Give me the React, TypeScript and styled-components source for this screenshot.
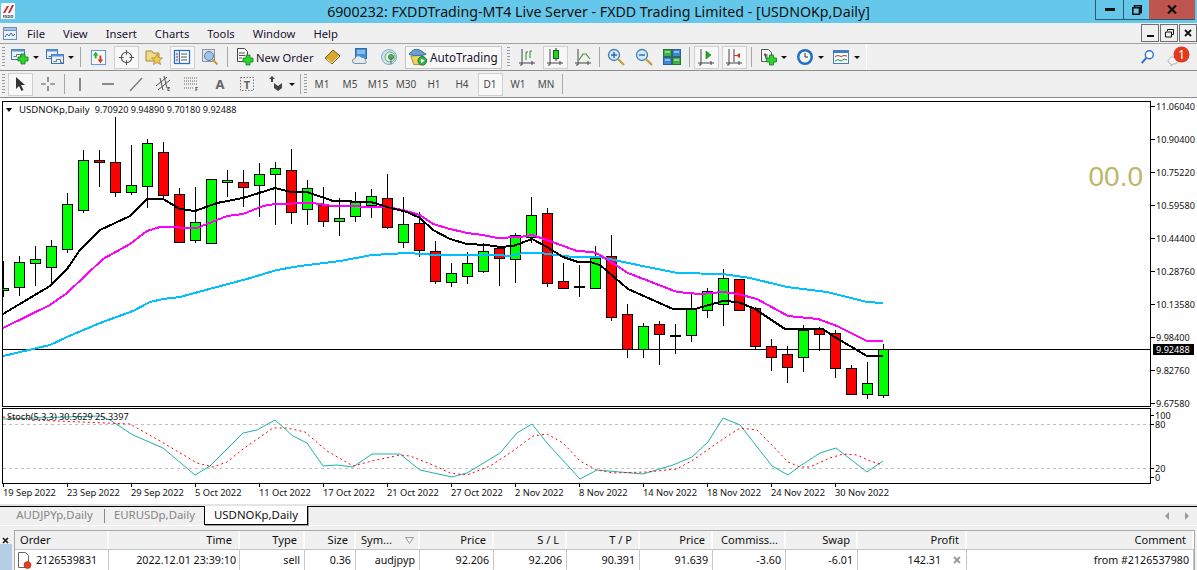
import React from "react";
import styled, { createGlobalStyle } from "styled-components";

const GlobalStyle = createGlobalStyle`
  html, body {
    margin: 0;
    padding: 0;
    background: #f0f0f0;
    overflow: hidden;
  }
  * { box-sizing: border-box; }
`;

const UI_FONT = `"Noto Sans", "Open Sans", sans-serif`;

const Window = styled.div`
  width: 1197px;
  height: 570px;
  display: flex;
  flex-direction: column;
  overflow: hidden;
  background: #f0f0f0;
  font-family: ${UI_FONT};
  font-size: 11px;
  color: #111;
`;

const TitleBar = styled.div`
  height: 23px;
  flex: none;
  display: grid;
  grid-template-columns: 1fr auto 1fr;
  background: #65c8ea;
`;

const TitleText = styled.div`
  font-size: 14.2px;
  line-height: 23px;
  color: #111;
  white-space: nowrap;
`;

const LogoSlot = styled.div`
  padding: 3px 0 0 1px;
`;

const WindowButtons = styled.div`
  display: flex;
  justify-content: flex-end;
  padding-right: 2px;
`;

const WindowButton = styled.div<{ $w: number; $close?: boolean }>`
  width: ${(p) => p.$w}px;
  height: 20px;
  display: flex;
  align-items: center;
  justify-content: center;
  background: ${(p) => (p.$close ? "#c0554f" : "transparent")};
  border: 0 solid #2b5a70;
  border-bottom-width: 1px;
  border-left-width: ${(p) => (p.$close ? 0 : 1)}px;
`;

const MenuBar = styled.div`
  height: 21px;
  flex: none;
  display: flex;
  align-items: center;
  border-bottom: 1px solid #a0a0a0;
  padding-left: 3px;
`;

const MenuItems = styled.div`
  display: flex;
  gap: 18px;
  margin-left: 10px;
  color: #1c1030;
  font-size: 11.25px;
`;

const MdiButtons = styled.div`
  margin-left: auto;
  display: flex;
  gap: 1px;
`;

const MdiButton = styled.div`
  width: 18px;
  height: 18px;
  display: flex;
  align-items: center;
  justify-content: center;
  border: 1px solid #707070;
  background: #f0f0f0;
`;

const ToolbarRow = styled.div`
  height: 27px;
  flex: none;
  display: flex;
  align-items: center;
  border-bottom: 1px solid #8c8c8c;
`;

const Grip = styled.div<{ $mx?: number }>`
  width: 3px;
  height: 20px;
  margin: 0 ${(p) => p.$mx ?? 1}px 0 ${(p) => p.$mx ?? 2}px;
  background: repeating-linear-gradient(#9a9a9a 0 1px, #f0f0f0 1px 3px);
`;

const Cell = styled.div<{ $w: number; $active?: boolean }>`
  width: ${(p) => p.$w}px;
  height: 23px;
  flex: none;
  display: flex;
  align-items: center;
  justify-content: center;
  position: relative;
  &::before {
    content: "";
    display: ${(p) => (p.$active ? "block" : "none")};
    position: absolute;
    inset: 0 1px 0 2px;
    background: #f8f8f8;
    border: 1px solid #cfcfcf;
  }
  & > * {
    position: relative;
  }
`;

const DropCell = styled(Cell)`
  justify-content: flex-start;
  padding-left: 5px;
  gap: 4px;
`;

const Caret = styled.span`
  width: 0;
  height: 0;
  border-left: 3px solid transparent;
  border-right: 3px solid transparent;
  border-top: 3px solid #111;
`;

const Separator = styled.div<{ $w: number }>`
  width: ${(p) => p.$w}px;
  height: 20px;
  flex: none;
  display: flex;
  justify-content: center;
  &::after {
    content: "";
    width: 1px;
    background: #a8a8a8;
  }
`;

const NewOrderButton = styled.div`
  width: 89px;
  height: 23px;
  flex: none;
  display: flex;
  align-items: center;
  gap: 2px;
  padding-left: 6px;
  font-size: 11.25px;
  color: #1c1030;
`;

const AutoTradingButton = styled.div`
  width: 97px;
  height: 23px;
  flex: none;
  margin: 0 2px;
  display: flex;
  align-items: center;
  gap: 1px;
  padding-left: 2px;
  background: #f8f8f8;
  border: 1px solid #c4c4c4;
  font-size: 11.7px;
  color: #1c1030;
`;

const Group = styled.div`
  width: 867px;
  height: 26px;
  flex: none;
  display: flex;
  align-items: center;
  border-right: 1px solid #ffffff;
`;

const RightIcons = styled.div`
  margin-left: auto;
  display: flex;
  align-items: center;
  gap: 11px;
  padding-right: 6px;
`;

const PeriodLabel = styled.span`
  font-size: 10px;
  color: #4a4a4a;
`;

const ChartArea = styled.div`
  height: 408px;
  flex: none;
  display: flex;
  flex-direction: column;
  background: #ffffff;
  border-bottom: 2px solid #e4e4e4;
  padding-top: 3px;
  font-size: 9.1px;
  color: #111;
`;

const PaneRow = styled.div<{ $h: number; $mt?: number }>`
  height: ${(p) => p.$h}px;
  margin-top: ${(p) => p.$mt ?? 0}px;
  flex: none;
  display: flex;
`;

const Plot = styled.div`
  width: 1149px;
  margin-left: 2px;
  flex: none;
  border: 1px solid #000;
  position: relative;
  overflow: hidden;
  svg {
    display: block;
  }
`;

const Legend = styled.div<{ $left: number; $top: number }>`
  position: absolute;
  left: ${(p) => p.$left}px;
  top: ${(p) => p.$top}px;
  display: flex;
  align-items: center;
  white-space: nowrap;
  line-height: 12px;
  gap: 5px;
`;

const LegendSymbol = styled.span`
  font-size: 9.6px;
  margin-left: 1px;
`;

const LegendArrow = styled.span`
  width: 0;
  height: 0;
  border-left: 3.5px solid transparent;
  border-right: 3.5px solid transparent;
  border-top: 4px solid #000;
  margin-right: 1px;
`;

const BigValue = styled.div`
  position: absolute;
  right: 7px;
  top: 59px;
  font-family: "Liberation Sans", Arial, sans-serif;
  font-size: 28px;
  line-height: 32px;
  color: #bdb76b;
`;

const PriceAxis = styled.div`
  flex: 1;
  position: relative;
`;

const PriceTick = styled.div`
  height: 33px;
  line-height: 12px;
  padding-left: 5px;
  position: relative;
  &::before {
    content: "";
    position: absolute;
    left: 0;
    top: 5px;
    width: 4px;
    height: 1px;
    background: #000;
  }
`;

const CurrentPrice = styled.div`
  position: absolute;
  left: 2px;
  top: 243px;
  width: 41px;
  height: 11px;
  line-height: 11px;
  padding-left: 3px;
  background: #000;
  color: #fff;
`;

const StochTick = styled.div<{ $top: number }>`
  position: absolute;
  left: 4px;
  top: ${(p) => p.$top}px;
  line-height: 9px;
  &::before {
    content: "";
    position: absolute;
    left: -4px;
    top: 4px;
    width: 3px;
    height: 1px;
    background: #000;
  }
`;

const DateAxis = styled.div`
  height: 20px;
  flex: none;
  display: flex;
  padding-left: 3px;
`;

const DateCell = styled.div`
  width: 64px;
  flex: none;
  white-space: nowrap;
  padding-top: 3px;
  line-height: 12px;
  font-size: 9.3px;
  position: relative;
  &::before {
    content: "";
    position: absolute;
    left: 0;
    top: 0;
    width: 1px;
    height: 3px;
    background: #000;
  }
`;

const TabBar = styled.div`
  height: 20px;
  flex: none;
  display: flex;
  align-items: stretch;
  border-top: 1px solid #000;
  border-bottom: 1px solid #ffffff;
  padding-left: 5px;
  font-size: 11.4px;
`;

const Tab = styled.div<{ $w: number; $active?: boolean }>`
  width: ${(p) => p.$w}px;
  flex: none;
  text-align: center;
  line-height: 18px;
  color: ${(p) => (p.$active ? "#111" : "#858585")};
  background: ${(p) => (p.$active ? "#fff" : "transparent")};
  border-left: ${(p) => (p.$active ? "1px solid #000" : "none")};
  border-right: ${(p) => (p.$active ? "1px solid #000" : "none")};
  border-bottom: ${(p) => (p.$active ? "1px solid #000" : "none")};
  box-shadow: ${(p) => (p.$active ? "1px 1px 0 #a0a0a0" : "none")};
  margin-top: -1px;
  position: relative;
`;

const TabDivider = styled.div`
  width: 1px;
  height: 14px;
  margin: 2px 0 0 0;
  background: #888;
  flex: none;
`;

const TabArrows = styled.div`
  margin-left: auto;
  display: flex;
  align-items: center;
  gap: 16px;
  padding-right: 8px;
`;

const TabArrow = styled.span<{ $right?: boolean }>`
  width: 0;
  height: 0;
  border-top: 4px solid transparent;
  border-bottom: 4px solid transparent;
  border-left: ${(p) => (p.$right ? "4px solid #9a9a9a" : "none")};
  border-right: ${(p) => (p.$right ? "none" : "4px solid #9a9a9a")};
`;

const Terminal = styled.div`
  flex: 1;
  display: flex;
  padding-top: 4px;
`;

const SideStrip = styled.div`
  width: 13px;
  flex: none;
  display: flex;
  flex-direction: column;
  margin-right: 1px;
`;

const SideClose = styled.div`
  height: 14px;
  padding: 2px 0 0 2px;
`;

const SideBlue = styled.div`
  flex: 1;
  width: 12px;
  background: #b5cde5;
`;

const Table = styled.div`
  width: 1181px;
  flex: none;
  border-top: 1px solid #a8a8a8;
  border-right: 1px solid #a8a8a8;
  border-left: 1px solid #a8a8a8;
  background: #fff;
`;

const COLUMNS = "94px 131px 65px 51px 64px 74px 73px 73px 73px 73px 72px 109px 1fr";

const HeaderRow = styled.div`
  display: grid;
  grid-template-columns: ${COLUMNS};
  height: 19px;
  background: #f0f0f0;
  border-bottom: 1px solid #c4c4c4;
  font-size: 11.1px;
`;

const HeaderCell = styled.div<{ $left?: boolean }>`
  padding: 0 ${(p) => (p.$left ? 0 : 6)}px 0 ${(p) => (p.$left ? 5 : 0)}px;
  line-height: 18px;
  border-right: 2px solid #fbfbfb;
  white-space: nowrap;
  display: flex;
  align-items: center;
  justify-content: ${(p) => (p.$left ? "space-between" : "flex-end")};
`;

const DataRow = styled.div`
  display: grid;
  grid-template-columns: ${COLUMNS};
  height: 20px;
  background: #fff;
  font-size: 10.7px;
`;

const DataCell = styled.div<{ $pr?: number }>`
  display: flex;
  align-items: center;
  justify-content: flex-end;
  gap: 4px;
  padding-right: ${(p) => p.$pr ?? 4}px;
  border-right: 1px solid #c8c8c8;
  white-space: nowrap;
`;

const OrderCell = styled(DataCell)`
  justify-content: flex-start;
  padding-left: 2px;
`;

const SortMark = styled.svg`
  margin-right: 4px;
`;

// ---- icons ----

const Ico: React.FC<{ s?: number; children: React.ReactNode }> = ({ s = 18, children }) => (
  <svg width={s} height={s} viewBox="0 0 18 18">
    {children}
  </svg>
);

const Plus = ({ x, y }: { x: number; y: number }) => (
  <path
    d={`M${x - 2} ${y - 5}h4v3h3v4h-3v3h-4v-3h-3v-4h3z`}
    fill="#2bd62b"
    stroke="#0c7a1a"
    strokeWidth=".8"
  />
);

const MiniWindow = ({ x, y, w, h }: { x: number; y: number; w: number; h: number }) => (
  <g>
    <rect x={x} y={y} width={w} height={h} fill="#eaf2fb" stroke="#3d74b4" />
    <rect x={x} y={y} width={w} height="2" fill="#5c93d1" />
    <path d={`M${x + 2} ${y + 7}h3v-2h4v3h2`} fill="none" stroke="#555" strokeWidth=".8" />
  </g>
);

const NewChartIcon = () => (
  <Ico>
    <MiniWindow x={0.5} y={1.5} w={13} h={10} />
    <Plus x={12} y={11} />
  </Ico>
);

const ProfilesIcon = () => (
  <Ico>
    <MiniWindow x={0.5} y={1.5} w={11} h={9} />
    <MiniWindow x={5.5} y={6.5} w={12} h={9} />
  </Ico>
);

const ExpertIcon = () => (
  <Ico s={17}>
    <rect x="1.5" y="1.5" width="15" height="15" fill="#f7f7f7" stroke="#5d92cc" />
    <path d="M6 3l3 4H7v3H5V7H3z" fill="#22b522" />
    <path d="M11 15l-3-4h2V7h2v4h2z" fill="#e2351e" />
  </Ico>
);

const CrosshairIcon = () => (
  <Ico s={17}>
    <circle cx="9" cy="9" r="5.5" fill="none" stroke="#555" strokeWidth="1.2" />
    <path d="M9 1v5M9 12v5M1 9h5M12 9h5" stroke="#555" strokeWidth="1.2" />
  </Ico>
);

const FolderStarIcon = () => (
  <Ico>
    <path d="M1 3h6l1 2h6v8H1z" fill="#f1d98a" stroke="#a88a3a" />
    <path d="M12 6l1.7 3.6 3.8.4-2.9 2.6.9 3.9-3.5-2-3.5 2 .9-3.9L6.500 10l3.800-.4z" fill="#eec84a" stroke="#a5822a" strokeWidth=".7" />
  </Ico>
);

const NavigatorIcon = () => (
  <Ico>
    <rect x="1.5" y="2.500" width="15" height="13" fill="#fff" stroke="#2c6fb5" strokeWidth="1.300" />
    <rect x="1.500" y="2.500" width="5" height="13" fill="#cfe2f6" stroke="#2c6fb5" />
    <path d="M8 6h6M8 9h6M8 12h6" stroke="#555" />
    <path d="M3 6h2M3 9h2M3 12h2" stroke="#c33" />
  </Ico>
);

const TesterIcon = () => (
  <Ico>
    <rect x="1.500" y="1.500" width="12" height="12" fill="#dfe4ea" stroke="#8a94a0" />
    <circle cx="8" cy="8" r="4.500" fill="#9cc6ea" stroke="#5a7ea0" />
    <path d="M11.500 11.500l5 5" stroke="#c99b3a" strokeWidth="2" />
  </Ico>
);

const NewOrderIcon = () => (
  <Ico>
    <path d="M1.500.5h7l3 3v10h-10z" fill="#fff" stroke="#444" />
    <path d="M3 5h6M3 7.500h6M3 10h3" stroke="#555" />
    <Plus x={12} y={12} />
  </Ico>
);

const BookIcon = () => (
  <Ico>
    <path d="M1 10L9 2l7 6-8 8z" fill="#d8a92e" stroke="#7a5a12" />
    <path d="M3 11l5 4 7-7" fill="none" stroke="#f6e7ae" />
  </Ico>
);

const CloudIcon = () => (
  <Ico>
    <rect x="3.500" y=".5" width="11" height="10" fill="#3f92dc" stroke="#2a6cab" />
    <path d="M5 3h8M5 5h8" stroke="#cfe6fa" />
    <path d="M3 15.500a2.500 2.500 0 010-5 3.500 3.500 0 016.500-1 3 3 0 014 3 2 2 0 010 3z" fill="#e2e9f1" stroke="#7f8d9c" />
  </Ico>
);

const SignalIcon = () => (
  <Ico>
    <circle cx="9" cy="9" r="7.500" fill="#cfe3ee" stroke="#7ab0cc" />
    <circle cx="10" cy="9" r="5" fill="#e6f1e2" stroke="#6ab07a" />
    <circle cx="11" cy="9" r="2.500" fill="#58b562" stroke="#37894a" />
    <path d="M11 9v7" stroke="#5a6a70" />
  </Ico>
);

const AutoTradingIcon = () => (
  <svg width="21" height="18" viewBox="0 0 22 18">
    <path d="M3 8l12-1 2 6-4 4H6z" fill="#f0d25e" stroke="#a88a2a" />
    <path d="M1 6c2-1 3-5 8-5s7 4 10 5c-3 2-15 2-18 0z" fill="#6b9fd2" stroke="#3a6a9c" />
    <circle cx="15" cy="13" r="4.500" fill="#2fb34a" stroke="#16752c" />
    <path d="M13.500 10.500l4 2.500-4 2.500z" fill="#fff" />
  </svg>
);

const Axes = () => <path d="M4 1v16M1 15h16M2 17h2M14 13v4" stroke="#444" fill="none" />;

const BarsIcon = () => (
  <Ico>
    <Axes />
    <path d="M8 12V4M8 4h2M12 10V3M12 3h2" stroke="#2a8f2a" fill="none" />
  </Ico>
);

const CandleIcon = () => (
  <Ico>
    <Axes />
    <path d="M10 0v13" stroke="#222" />
    <rect x="7.500" y="2.500" width="5" height="8" fill="#22d422" stroke="#0d6d0d" />
  </Ico>
);

const LineIcon = () => (
  <Ico>
    <Axes />
    <path d="M5 12l4-6 3 0 4 5" stroke="#3a9a3a" fill="none" strokeWidth="1.200" />
  </Ico>
);

const ZoomIcon = ({ plus }: { plus?: boolean }) => (
  <Ico>
    <circle cx="7" cy="7" r="5.500" fill="#d4e8f8" stroke="#3f7fb8" strokeWidth="1.300" />
    <path d={plus ? "M4 7h6M7 4v6" : "M4 7h6"} stroke="#2a6cab" strokeWidth="1.400" />
    <path d="M11 11l6 6" stroke="#c99b3a" strokeWidth="2.200" />
  </Ico>
);

const TileIcon = () => (
  <Ico>
    <rect x=".5" y="1.500" width="8" height="7" fill="#3fae4a" stroke="#24762e" />
    <rect x="9.500" y="1.500" width="8" height="7" fill="#3f86d8" stroke="#2a5f9f" />
    <rect x=".5" y="9.500" width="8" height="7" fill="#3f86d8" stroke="#2a5f9f" />
    <rect x="9.500" y="9.500" width="8" height="7" fill="#3fae4a" stroke="#24762e" />
    <path d="M2 4h5M11 4h5M2 12h5M11 12h5" stroke="#e8f3ff" />
  </Ico>
);

const AutoScrollIcon = () => (
  <Ico>
    <Axes />
    <path d="M9 3l5 4-5 4z" fill="#2aa82a" stroke="#127012" strokeWidth=".6" />
  </Ico>
);

const ShiftIcon = () => (
  <Ico>
    <Axes />
    <path d="M9 1v13" stroke="#444" />
    <path d="M15 5l-4 2.500 4 2.500z" fill="#d8351e" />
    <path d="M9 7.500h3" stroke="#d8351e" />
  </Ico>
);

const IndicatorsIcon = () => (
  <Ico>
    <path d="M2.500 1.500h7l3 3v9h-10z" fill="#f4f4f4" stroke="#555" />
    <path d="M5 6h2v5M8 6v5" stroke="#777" />
    <Plus x={12.500} y={12} />
  </Ico>
);

const ClockIcon = () => (
  <Ico>
    <circle cx="9" cy="9" r="8" fill="#1f6fc0" />
    <circle cx="9" cy="9" r="5.500" fill="#f2f4f6" />
    <path d="M9 5v4h3" stroke="#333" fill="none" />
  </Ico>
);

const TemplateIcon = () => (
  <Ico>
    <rect x="1.500" y="2.500" width="15" height="13" fill="#f4f8fc" stroke="#4a7cb0" />
    <rect x="1.500" y="2.500" width="15" height="2.500" fill="#3e7fc4" />
    <path d="M3 8.500l3-1 3 1 3-1 3 .5" stroke="#b3402a" fill="none" />
    <path d="M3 13l3-1.500 3 1.500 3-2 3 1" stroke="#2d9a3a" fill="none" />
  </Ico>
);

const SearchIcon = () => (
  <Ico s={16}>
    <circle cx="10.500" cy="6.500" r="4.500" fill="#fff" stroke="#2f6fc8" strokeWidth="1.600" />
    <path d="M7 10l-5 6" stroke="#2f6fc8" strokeWidth="2.200" />
  </Ico>
);

const BubbleIcon = () => (
  <svg width="24" height="22" viewBox="0 0 24 22">
    <path d="M2 17c-2-2 0-6 4-6s6 3 4 6c-1 1-3 1-4 1l-2 2v-2c-1 0-1-1-2-1z" fill="#f4f4f4" stroke="#b4b4b4" />
    <circle cx="14.500" cy="8.500" r="8" fill="#e23a1e" />
    <text x="14.500" y="13" textAnchor="middle" fontFamily={UI_FONT} fontSize="12.500" fill="#fff">
      1
    </text>
  </svg>
);

const CursorIcon = () => (
  <Ico>
    <path d="M5 2l9 8h-4l2.500 5-2 1-2.500-5-3 3z" fill="#333" />
  </Ico>
);

const ThinCross = () => (
  <Ico>
    <path d="M9 2v5M9 11v5M2 9h5M11 9h5" stroke="#555" strokeWidth="1.200" />
  </Ico>
);

const VLine = () => (
  <Ico>
    <path d="M9 3v13" stroke="#555" strokeWidth="1.300" />
  </Ico>
);

const HLine = () => (
  <Ico>
    <path d="M3 9h12" stroke="#555" strokeWidth="1.300" />
  </Ico>
);

const TrendLine = () => (
  <Ico>
    <path d="M3 16L15 3" stroke="#777" strokeWidth="1.200" />
  </Ico>
);

const ChannelIcon = () => (
  <Ico>
    <path d="M1 11L12 2M3 15L15 5M5 3l3 12M9 1l3 12" stroke="#555" />
    <text x="12" y="16" fontFamily={UI_FONT} fontSize="5.500" fontWeight="700" fill="#444">
      E
    </text>
  </Ico>
);

const FiboIcon = () => (
  <Ico>
    <path d="M1 3h13M1 6h13M1 9h13M1 13h10" stroke="#666" strokeDasharray="1 1" />
    <text x="12" y="16" fontFamily={UI_FONT} fontSize="5.500" fontWeight="700" fill="#444">
      F
    </text>
  </Ico>
);

const LetterA = () => (
  <Ico>
    <text x="9" y="14" textAnchor="middle" fontFamily={UI_FONT} fontSize="13" fontWeight="700" fill="#666">
      A
    </text>
  </Ico>
);

const LetterT = () => (
  <Ico>
    <rect x="1.500" y="2.500" width="13" height="13" fill="none" stroke="#777" strokeDasharray="1.500 1.500" />
    <text x="8" y="13.500" textAnchor="middle" fontFamily={UI_FONT} fontSize="11" fontWeight="700" fill="#666">
      T
    </text>
  </Ico>
);

const ArrowsIcon = () => (
  <Ico>
    <path d="M5 1l3 3H6v3H4V4H2z" fill="#444" />
    <path d="M7 8l4 3 4-3v5l-4 3-4-3z" fill="#444" />
  </Ico>
);

const Logo = () => (
  <svg width="14" height="16" viewBox="0 0 14 16">
    <rect width="14" height="16" fill="#fdfdfd" />
    <path d="M2 10L6 3h2l-4 7zM7 10l4-8h2l-4 8z" fill="#c9222a" />
    <text x="7" y="14.500" textAnchor="middle" fontFamily={UI_FONT} fontSize="4" fontWeight="700" fill="#333">
      FXDD
    </text>
  </svg>
);

const MenuDocIcon = () => (
  <svg width="14" height="16" viewBox="0 0 14 16">
    <rect x=".5" y="2.500" width="13" height="12" fill="#e8f1fa" stroke="#6a8fb8" />
    <rect x=".5" y="2.500" width="13" height="3" fill="#a7c5e6" stroke="#6a8fb8" />
    <path d="M2 12l2-3 2 2 2-3 2 3 2-2" stroke="#4a6a90" fill="none" />
  </svg>
);

// ---- chart data, page coordinates ----

type Candle = [number, number, number, number, number, "g" | "r"];

const FIRST_X = 3;
// body top, body bottom, wick top, wick bottom, colour; one candle per 16px
const rows: [number, number, number, number, "g" | "r"][] = [
  [288, 290, 261, 297, "g"],
  [262, 287, 256, 296, "g"],
  [259, 263, 246, 286, "g"],
  [246, 267, 240, 283, "g"],
  [204, 249, 193, 253, "g"],
  [160, 210, 150, 213, "g"],
  [160, 162, 150, 187, "r"],
  [162, 192, 117, 197, "r"],
  [185, 192, 145, 195, "g"],
  [143, 186, 139, 208, "g"],
  [152, 195, 142, 199, "r"],
  [194, 242, 188, 243, "r"],
  [222, 240, 187, 243, "g"],
  [179, 243, 179, 243, "g"],
  [180, 182, 170, 197, "g"],
  [182, 187, 170, 207, "r"],
  [174, 185, 163, 217, "g"],
  [168, 174, 162, 225, "g"],
  [170, 212, 149, 224, "r"],
  [188, 209, 180, 225, "g"],
  [205, 221, 187, 227, "r"],
  [218, 221, 198, 236, "g"],
  [202, 216, 192, 222, "g"],
  [196, 205, 189, 218, "g"],
  [198, 227, 174, 229, "r"],
  [224, 242, 197, 248, "g"],
  [223, 250, 212, 257, "r"],
  [251, 281, 241, 284, "r"],
  [273, 282, 263, 287, "g"],
  [263, 276, 252, 284, "g"],
  [251, 271, 243, 273, "g"],
  [248, 258, 248, 286, "r"],
  [235, 259, 233, 283, "g"],
  [215, 237, 197, 243, "g"],
  [213, 283, 208, 287, "r"],
  [281, 288, 263, 289, "r"],
  [286, 286, 265, 297, "r"],
  [258, 288, 246, 288, "g"],
  [256, 317, 235, 321, "r"],
  [314, 349, 304, 358, "r"],
  [326, 349, 323, 358, "g"],
  [324, 334, 321, 365, "r"],
  [335, 335, 324, 354, "g"],
  [309, 335, 292, 342, "g"],
  [291, 310, 288, 318, "g"],
  [278, 304, 269, 326, "g"],
  [279, 310, 279, 310, "r"],
  [308, 346, 307, 349, "r"],
  [346, 357, 339, 371, "r"],
  [354, 367, 346, 383, "r"],
  [330, 357, 325, 372, "g"],
  [329, 334, 327, 351, "r"],
  [333, 368, 330, 378, "r"],
  [368, 394, 365, 394, "r"],
  [383, 394, 362, 399, "g"],
  [349, 395, 344, 398, "g"],
];

const candles: Candle[] = rows.map((r, i) => [FIRST_X + i * 16, r[0], r[1], r[2], r[3], r[4]]);

const toPoints = (pts: number[][]) => pts.map((p) => p.join(",")).join(" ");

const blackMa = [
  [3, 314], [50, 286], [67, 269], [80, 250], [100, 230], [130, 216], [147, 199], [163, 199],
  [180, 209], [195, 211], [217, 203], [243, 198], [275, 188], [291, 192], [307, 192], [333, 201],
  [371, 202], [387, 207], [407, 212], [420, 218], [433, 230], [450, 239], [467, 244], [487, 245],
  [500, 247], [513, 246], [532, 239], [547, 247], [563, 257], [578, 262], [590, 262], [600, 265],
  [628, 289], [673, 309], [695, 309], [723, 301], [738, 302], [755, 309], [785, 329], [823, 329],
  [833, 336], [867, 356], [883, 356],
];

const magentaMa = [
  [3, 328], [50, 305], [67, 293], [103, 259], [130, 244], [147, 231], [160, 227], [197, 228],
  [227, 216], [243, 214], [263, 206], [275, 204], [313, 203], [332, 206], [387, 207], [403, 210],
  [420, 215], [433, 224], [450, 229], [467, 233], [483, 235], [497, 238], [520, 237], [532, 235],
  [547, 240], [577, 251], [593, 252], [600, 255], [628, 273], [677, 292], [700, 294], [723, 292],
  [738, 294], [757, 299], [788, 316], [818, 319], [837, 326], [867, 341], [883, 341],
];

const blueMa = [
  [3, 356], [33, 349], [50, 345], [67, 337], [100, 323], [133, 311], [150, 302], [163, 299],
  [180, 297], [213, 288], [247, 279], [277, 270], [300, 266], [340, 261], [372, 255], [407, 253],
  [437, 255], [497, 255], [510, 256], [523, 253], [540, 253], [573, 257], [600, 257], [633, 264],
  [677, 273], [723, 274], [750, 278], [787, 287], [827, 292], [867, 302], [883, 303],
];

const stochMain = [
  [3, 419], [33, 418], [100, 416], [110, 420], [133, 435], [163, 448], [195, 475], [210, 466],
  [243, 433], [257, 430], [275, 420], [293, 436], [307, 443], [323, 466], [337, 465], [353, 467],
  [372, 454], [400, 454], [420, 470], [452, 477], [467, 473], [500, 453], [517, 433], [532, 424],
  [547, 443], [580, 479], [597, 470], [620, 472], [643, 474], [673, 465], [692, 457], [708, 442],
  [723, 418], [740, 425], [772, 466], [788, 475], [800, 466], [820, 453], [836, 448], [867, 472],
  [883, 461],
];

const stochSignal = [
  [3, 417], [33, 420], [130, 424], [160, 441], [197, 463], [213, 467], [227, 462], [243, 449],
  [273, 428], [287, 428], [305, 432], [327, 451], [353, 466], [372, 461], [400, 455], [410, 456],
  [433, 465], [450, 473], [467, 475], [490, 466], [513, 451], [533, 436], [547, 434], [563, 443],
  [580, 461], [597, 470], [613, 473], [647, 472], [677, 469], [693, 460], [723, 439], [740, 428],
  [757, 430], [770, 443], [788, 462], [800, 467], [810, 467], [830, 458], [843, 454], [857, 455],
  [870, 461], [883, 465],
];

const PRICES = [
  "11.06040", "10.90400", "10.75220", "10.59580", "10.44400",
  "10.28760", "10.13580", "9.98400", "9.82760", "9.67580",
];

const DATES = [
  "19 Sep 2022", "23 Sep 2022", "29 Sep 2022", "5 Oct 2022", "11 Oct 2022", "17 Oct 2022",
  "21 Oct 2022", "27 Oct 2022", "2 Nov 2022", "8 Nov 2022", "14 Nov 2022", "18 Nov 2022",
  "24 Nov 2022", "30 Nov 2022",
];

const PricePlot = () => (
  <svg width="1147" height="304" viewBox="3 102 1147 304" shapeRendering="crispEdges">
    <line x1="3" x2="1150" y1="349.5" y2="349.5" stroke="#000" />
    {candles.map(([x, top, bottom, wickTop, wickBottom, dir]) => (
      <g key={x}>
        <line x1={x + 0.5} x2={x + 0.5} y1={wickTop} y2={wickBottom} stroke="#000" />
        <rect
          x={x - 4.5}
          y={top + 0.5}
          width={10}
          height={Math.max(bottom - top, 1)}
          fill={dir === "g" ? "#00ff00" : "#ff0000"}
          stroke="#000"
        />
      </g>
    ))}
    <polyline points={toPoints(blueMa)} fill="none" stroke="#00bfff" strokeWidth="2" />
    <polyline points={toPoints(magentaMa)} fill="none" stroke="#ff00ff" strokeWidth="2" />
    <polyline points={toPoints(blackMa)} fill="none" stroke="#000" strokeWidth="2" />
  </svg>
);

const StochPlot = () => (
  <svg width="1147" height="74" viewBox="3 409 1147 74">
    <g shapeRendering="crispEdges">
      <line x1="3" x2="1150" y1="424.5" y2="424.5" stroke="#c0c0c0" strokeDasharray="3 3" />
      <line x1="3" x2="1150" y1="468.5" y2="468.5" stroke="#c0c0c0" strokeDasharray="3 3" />
    </g>
    <polyline points={toPoints(stochMain)} fill="none" stroke="#20b2aa" strokeWidth="1" />
    <polyline
      points={toPoints(stochSignal)}
      fill="none"
      stroke="#ff0000"
      strokeWidth="1"
      strokeDasharray="2 3"
    />
  </svg>
);

const HEADERS = ["Time", "Type", "Size"];
const HEADERS2 = ["Price", "S / L", "T / P", "Price", "Commiss...", "Swap", "Profit", "Comment"];
const VALUES = ["92.206", "92.206", "90.391", "91.639", "-3.60", "-6.01"];

const App = () => (
  <>
    <GlobalStyle />
    <Window>
      <TitleBar>
        <LogoSlot>
          <Logo />
        </LogoSlot>
        <TitleText>6900232: FXDDTrading-MT4 Live Server - FXDD Trading Limited - [USDNOKp,Daily]</TitleText>
        <WindowButtons>
          <WindowButton $w={28}>
            <svg width="10" height="3"><rect width="10" height="3" fill="#111" /></svg>
          </WindowButton>
          <WindowButton $w={26}>
            <svg width="10" height="10" viewBox="0 0 10 10">
              <path d="M2.500 2.500V.8h6.700v6.700H7.500M.8 2.800h6.700v6.400H.8z" fill="none" stroke="#111" strokeWidth="1.600" />
            </svg>
          </WindowButton>
          <WindowButton $w={46} $close>
            <svg width="10" height="9" viewBox="0 0 10 9">
              <path d="M1 .5l8 8M9 .5l-8 8" stroke="#111" strokeWidth="2.200" />
            </svg>
          </WindowButton>
        </WindowButtons>
      </TitleBar>

      <MenuBar>
        <MenuDocIcon />
        <MenuItems>
          {["File", "View", "Insert", "Charts", "Tools", "Window", "Help"].map((m) => (
            <span key={m}>{m}</span>
          ))}
        </MenuItems>
        <MdiButtons>
          <MdiButton>
            <svg width="7" height="8"><rect y="6" width="7" height="2" fill="#111" /></svg>
          </MdiButton>
          <MdiButton>
            <svg width="9" height="9" viewBox="0 0 9 9">
              <path d="M2.500 2V.5h6v5H7M.5 3h6v5h-6z" fill="none" stroke="#111" />
            </svg>
          </MdiButton>
          <MdiButton>
            <svg width="8" height="8" viewBox="0 0 8 8">
              <path d="M1 1l6 6M7 1L1 7" stroke="#111" strokeWidth="1.800" />
            </svg>
          </MdiButton>
        </MdiButtons>
      </MenuBar>

      <ToolbarRow>
        <Group>
          <Grip />
          <DropCell $w={35}><NewChartIcon /><Caret /></DropCell>
          <DropCell $w={35}><ProfilesIcon /><Caret /></DropCell>
          <Separator $w={8} />
          <Cell $w={28}><ExpertIcon /></Cell>
          <Cell $w={28} $active><CrosshairIcon /></Cell>
          <Cell $w={28}><FolderStarIcon /></Cell>
          <Cell $w={28} $active><NavigatorIcon /></Cell>
          <Cell $w={28}><TesterIcon /></Cell>
          <Separator $w={6} />
          <NewOrderButton><NewOrderIcon />New Order</NewOrderButton>
          <Cell $w={28}><BookIcon /></Cell>
          <Cell $w={28}><CloudIcon /></Cell>
          <Cell $w={28}><SignalIcon /></Cell>
          <AutoTradingButton><AutoTradingIcon />AutoTrading</AutoTradingButton>
          <Grip $mx={3} />
          <Cell $w={28}><BarsIcon /></Cell>
          <Cell $w={28} $active><CandleIcon /></Cell>
          <Cell $w={28}><LineIcon /></Cell>
          <Separator $w={5} />
          <Cell $w={28}><ZoomIcon plus /></Cell>
          <Cell $w={28}><ZoomIcon /></Cell>
          <Cell $w={28}><TileIcon /></Cell>
          <Separator $w={6} />
          <Cell $w={28} $active><AutoScrollIcon /></Cell>
          <Cell $w={28} $active><ShiftIcon /></Cell>
          <Separator $w={6} />
          <DropCell $w={37}><IndicatorsIcon /><Caret /></DropCell>
          <DropCell $w={36}><ClockIcon /><Caret /></DropCell>
          <DropCell $w={38}><TemplateIcon /><Caret /></DropCell>
        </Group>
        <RightIcons>
          <SearchIcon />
          <BubbleIcon />
        </RightIcons>
      </ToolbarRow>

      <ToolbarRow>
        <Grip />
        <Cell $w={28} $active><CursorIcon /></Cell>
        <Cell $w={28}><ThinCross /></Cell>
        <Separator $w={4} />
        <Cell $w={28}><VLine /></Cell>
        <Cell $w={28}><HLine /></Cell>
        <Cell $w={28}><TrendLine /></Cell>
        <Cell $w={28}><ChannelIcon /></Cell>
        <Cell $w={28}><FiboIcon /></Cell>
        <Cell $w={28}><LetterA /></Cell>
        <Cell $w={28}><LetterT /></Cell>
        <DropCell $w={36}><ArrowsIcon /><Caret /></DropCell>
        <Separator $w={4} />
        <Grip />
        <Cell $w={28}><PeriodLabel>M1</PeriodLabel></Cell>
        <Cell $w={28}><PeriodLabel>M5</PeriodLabel></Cell>
        <Cell $w={28}><PeriodLabel>M15</PeriodLabel></Cell>
        <Cell $w={28}><PeriodLabel>M30</PeriodLabel></Cell>
        <Cell $w={28}><PeriodLabel>H1</PeriodLabel></Cell>
        <Cell $w={28}><PeriodLabel>H4</PeriodLabel></Cell>
        <Cell $w={28} $active><PeriodLabel>D1</PeriodLabel></Cell>
        <Cell $w={28}><PeriodLabel>W1</PeriodLabel></Cell>
        <Cell $w={28}><PeriodLabel>MN</PeriodLabel></Cell>
        <Separator $w={4} />
      </ToolbarRow>

      <ChartArea>
        <PaneRow $h={306}>
          <Plot>
            <PricePlot />
            <Legend $left={3} $top={2}>
              <LegendArrow />
              <LegendSymbol>USDNOKp,Daily</LegendSymbol>
              <span>9.70920 9.94890 9.70180 9.92488</span>
            </Legend>
            <BigValue>00.0</BigValue>
          </Plot>
          <PriceAxis>
            {PRICES.map((p) => (
              <PriceTick key={p}>{p}</PriceTick>
            ))}
            <CurrentPrice>9.92488</CurrentPrice>
          </PriceAxis>
        </PaneRow>
        <PaneRow $h={76} $mt={1}>
          <Plot>
            <StochPlot />
            <Legend $left={4} $top={2}>
              <span>Stoch(5,3,3) 30.5629 25.3397</span>
            </Legend>
          </Plot>
          <PriceAxis>
            <StochTick $top={3}>100</StochTick>
            <StochTick $top={12}>80</StochTick>
            <StochTick $top={56}>20</StochTick>
            <StochTick $top={65}>0</StochTick>
          </PriceAxis>
        </PaneRow>
        <DateAxis>
          {DATES.map((d) => (
            <DateCell key={d}>{d}</DateCell>
          ))}
        </DateAxis>
      </ChartArea>

      <TabBar>
        <Tab $w={99}>AUDJPYp,Daily</Tab>
        <TabDivider />
        <Tab $w={99}>EURUSDp,Daily</Tab>
        <Tab $w={104} $active>USDNOKp,Daily</Tab>
        <TabArrows>
          <TabArrow />
          <TabArrow $right />
        </TabArrows>
      </TabBar>

      <Terminal>
        <SideStrip>
          <SideClose>
            <svg width="7" height="7" viewBox="0 0 7 7">
              <path d="M1 1l5 5M6 1L1 6" stroke="#111" strokeWidth="1.600" />
            </svg>
          </SideClose>
          <SideBlue />
        </SideStrip>
        <Table>
          <HeaderRow>
            <HeaderCell $left>Order</HeaderCell>
            {HEADERS.map((h) => (
              <HeaderCell key={h}>{h}</HeaderCell>
            ))}
            <HeaderCell $left>
              Sym...
              <SortMark width="9" height="7" viewBox="0 0 9 7">
                <path d="M.5.500h8L4.500 6.500z" fill="none" stroke="#999" />
              </SortMark>
            </HeaderCell>
            {HEADERS2.map((h, i) => (
              <HeaderCell key={i}>{h}</HeaderCell>
            ))}
          </HeaderRow>
          <DataRow>
            <OrderCell>
              <svg width="15" height="17" viewBox="0 0 15 17">
                <path d="M1.500.5h7l3 3v12h-10z" fill="#fff" stroke="#666" />
                <circle cx="10.500" cy="13" r="3.500" fill="#e2401e" stroke="#a02a10" strokeWidth=".6" />
              </svg>
              2126539831
            </OrderCell>
            <DataCell $pr={3}>2022.12.01 23:39:10</DataCell>
            <DataCell>sell</DataCell>
            <DataCell>0.36</DataCell>
            <DataCell>audjpyp</DataCell>
            {VALUES.map((v, i) => (
              <DataCell key={i}>{v}</DataCell>
            ))}
            <DataCell $pr={5}>
              142.31
              <svg width="16" height="8" viewBox="0 0 16 8">
                <path d="M9 1l6 6M15 1L9 7" stroke="#999" strokeWidth="1.800" />
              </svg>
            </DataCell>
            <DataCell>from #2126537980</DataCell>
          </DataRow>
        </Table>
      </Terminal>
    </Window>
  </>
);

export default App;
